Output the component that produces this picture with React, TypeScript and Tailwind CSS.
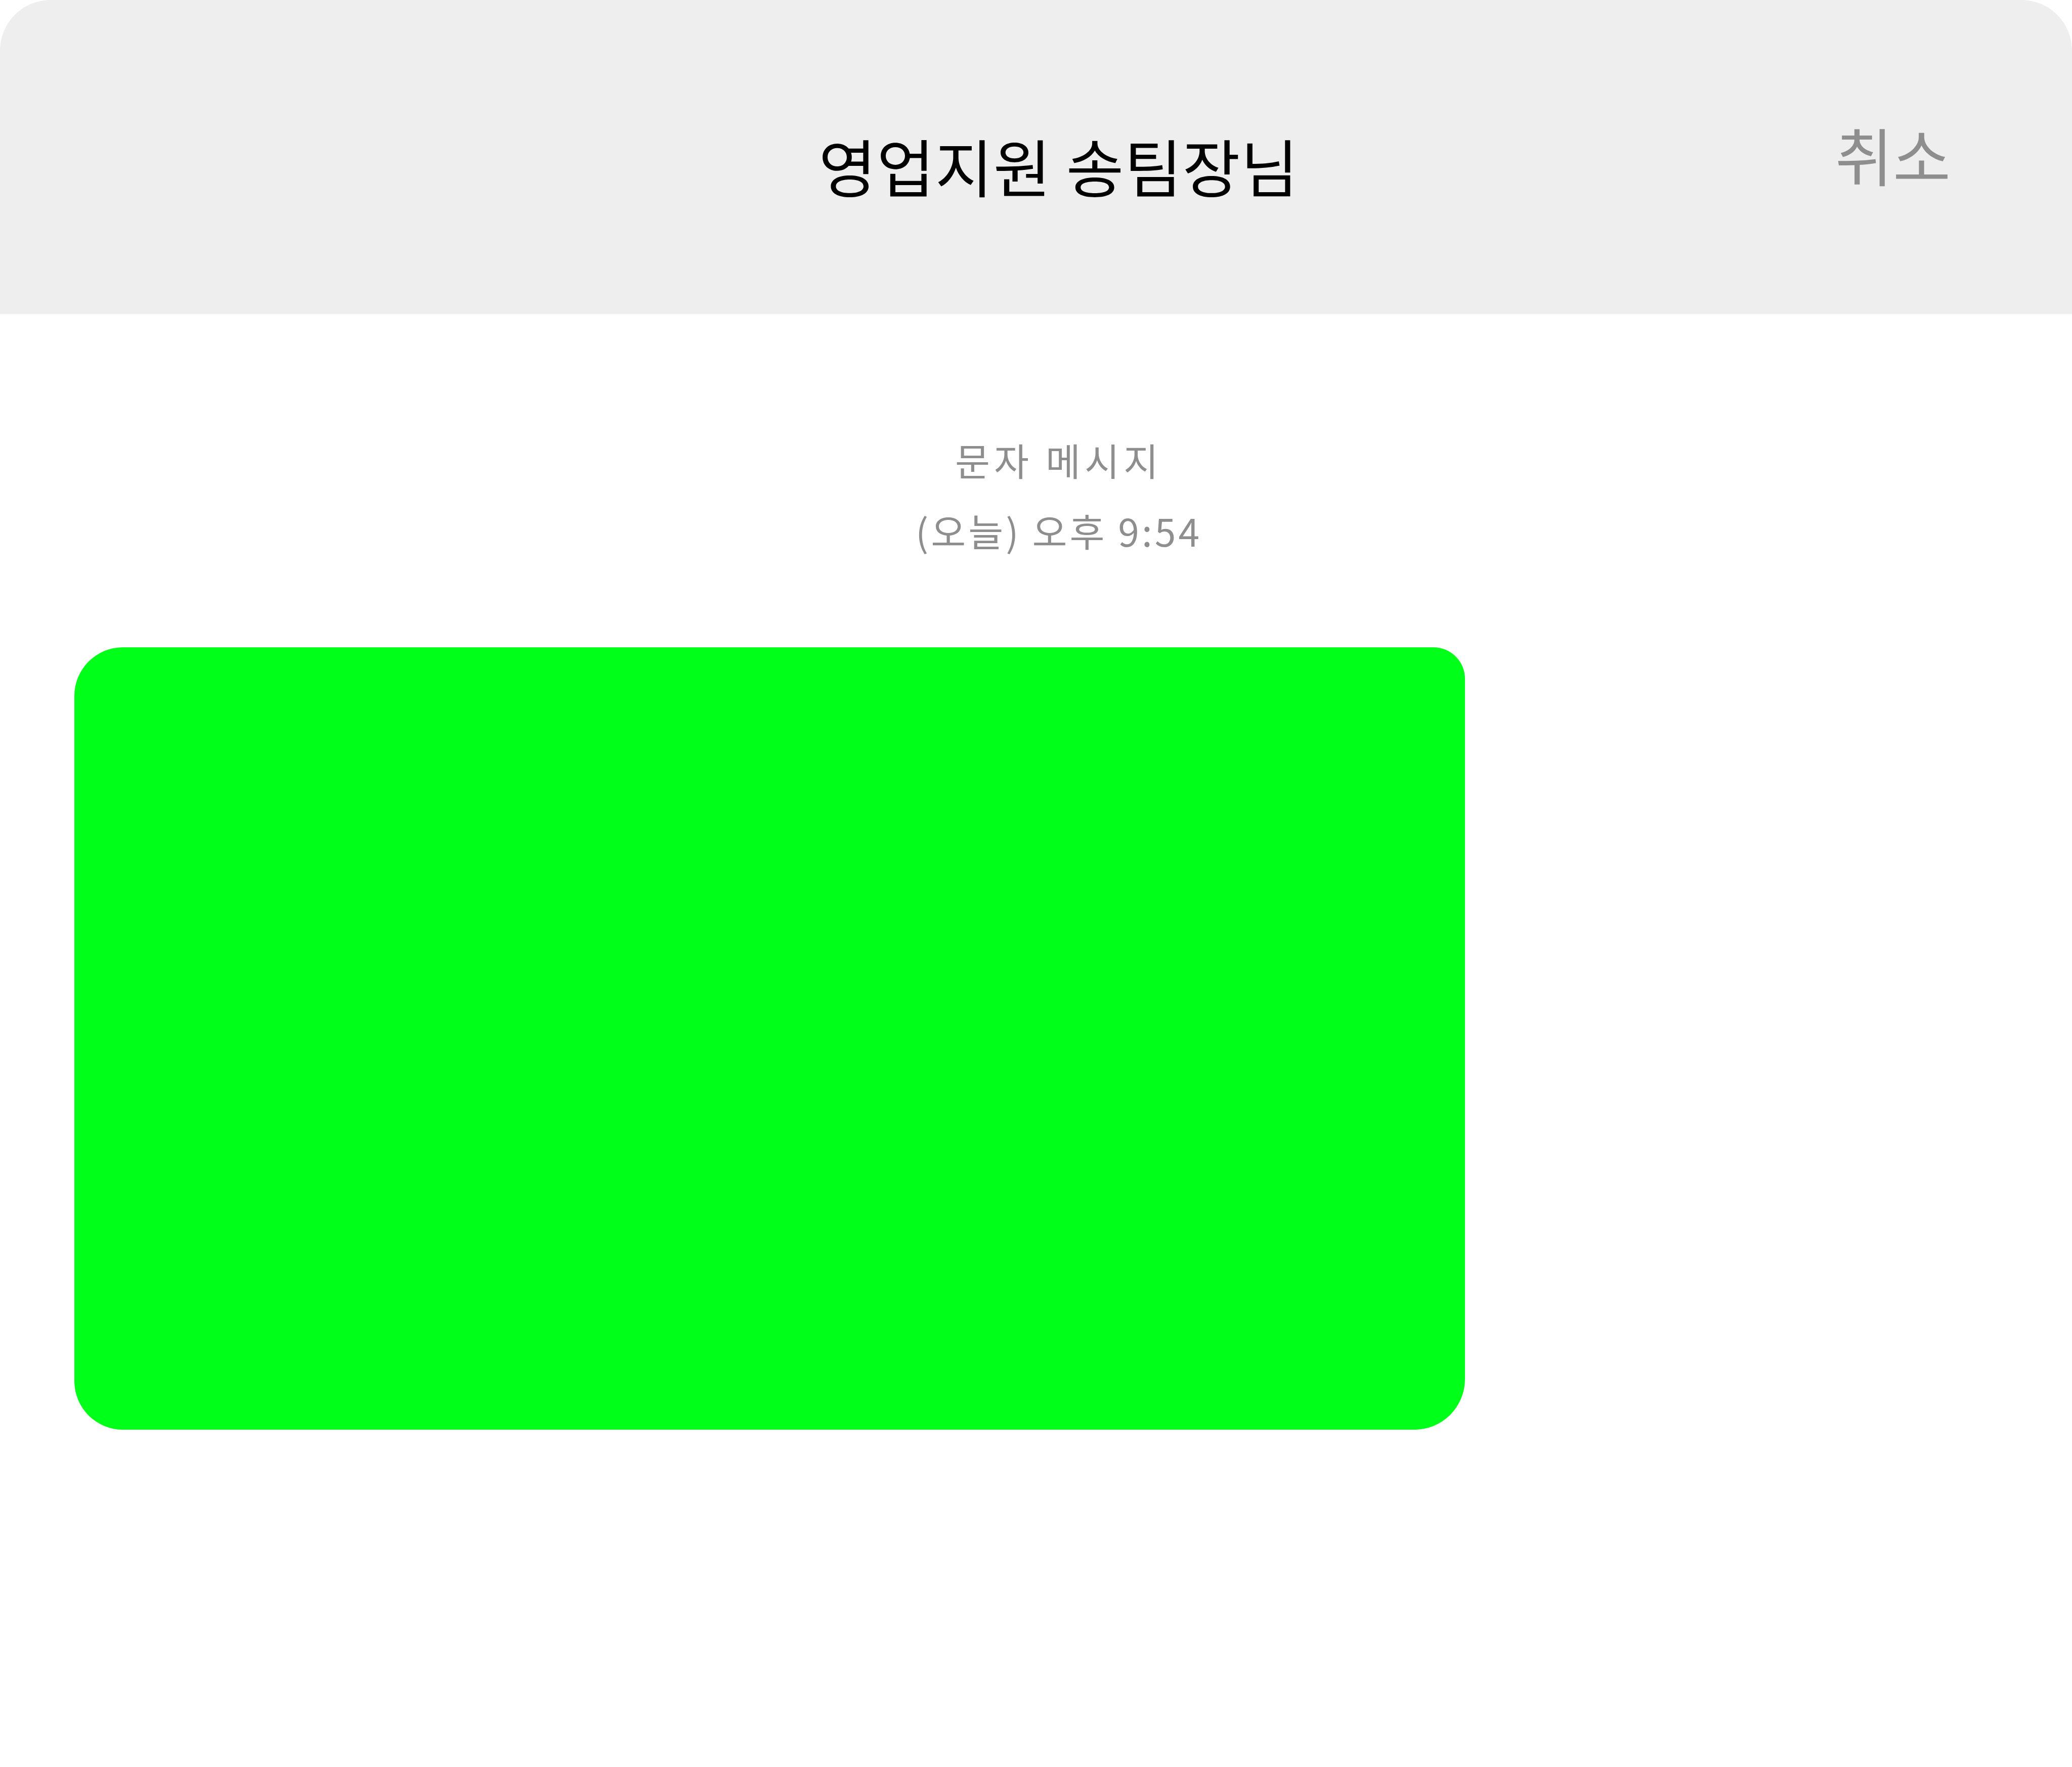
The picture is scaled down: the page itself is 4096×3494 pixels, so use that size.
export default function App() {
  return (
    <div
      className="w-[4096px] h-[3494px] bg-white overflow-hidden"
      style={{ fontFamily: '"Noto Sans CJK KR", "Noto Sans", sans-serif' }}
    >
      <header className="h-[621px] bg-[#eeeeee] rounded-t-[100px] grid grid-cols-[1fr_auto_1fr] items-center pl-[90px]">
        <div />
        <h1 className="text-[124px] leading-none tracking-[1px] text-black font-normal pt-[30px]">영업지원 송팀장님</h1>
        <div className="flex justify-end pr-[240px]">
          <button className="text-[124px] leading-none text-[#8e8e8e] pb-[14px]">취소</button>
        </div>
      </header>
      <main className="flex flex-col">
        <div className="flex flex-col items-center pl-[90px] pt-[218px] text-[75px] leading-[140px] text-[#8e8e8e]">
          <p className="tracking-[8px]">문자 메시지</p>
          <p className="tracking-[5px]">(오늘) 오후 9:54</p>
        </div>
        <div className="mt-[161px] ml-[147px] w-[2749px] h-[1547px] bg-[#00ff19] rounded-tl-[96px] rounded-tr-[62px] rounded-br-[100px] rounded-bl-[96px]" />
      </main>
    </div>
  );
}
